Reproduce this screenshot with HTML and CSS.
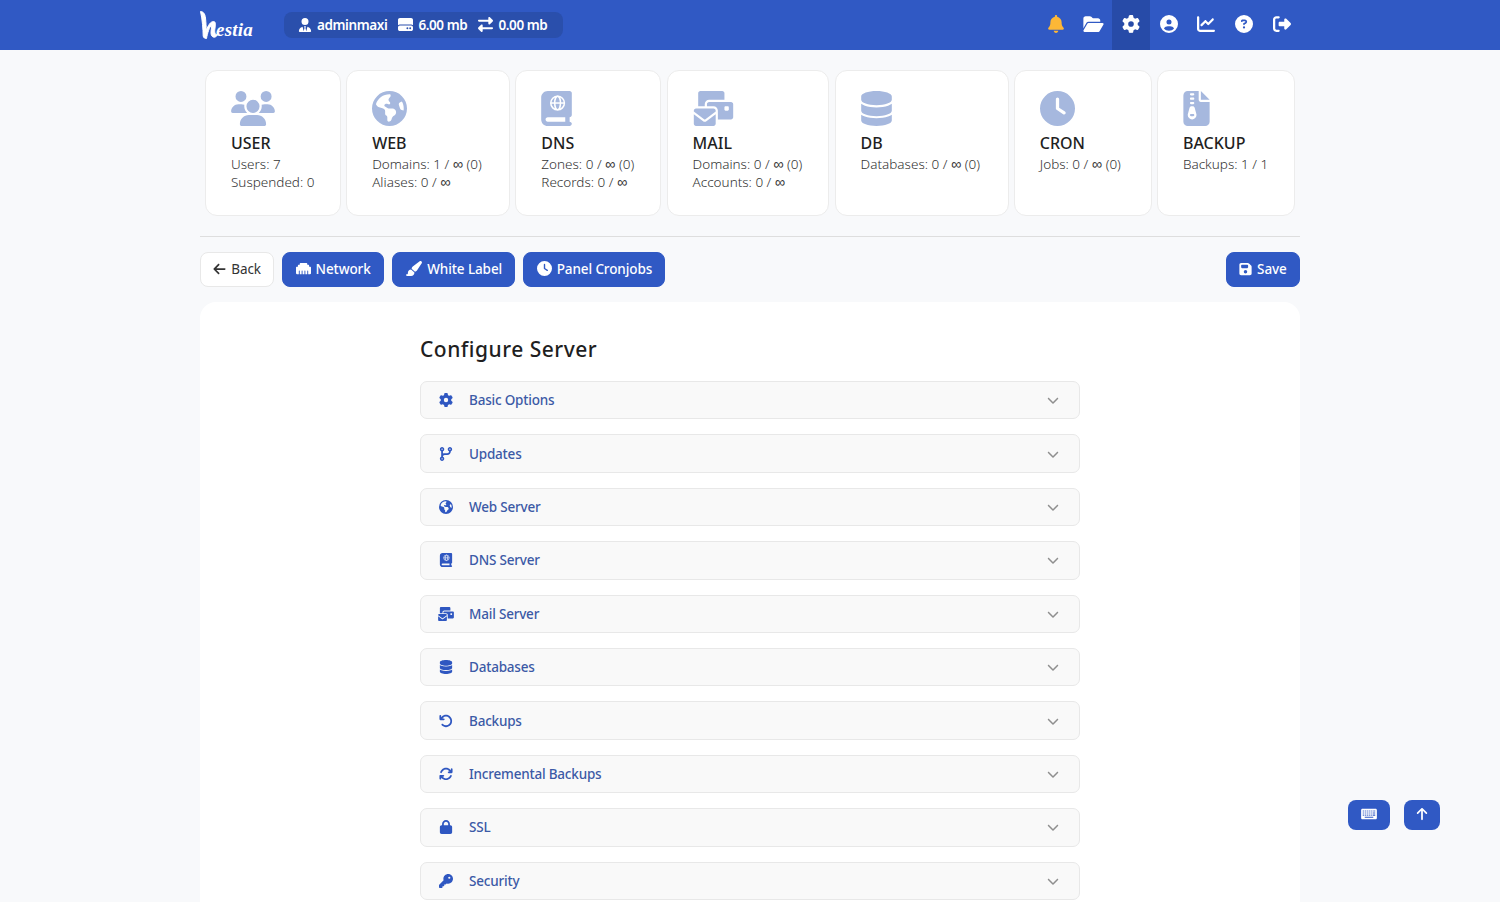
FILE: index.html
```html
<!DOCTYPE html>
<html lang="en">
<head>
<meta charset="utf-8">
<title>Configure Server</title>
<link rel="stylesheet" href="styles.css">
</head>
<body>
<svg class="sprite" xmlns="http://www.w3.org/2000/svg">
<symbol id="i-gear" viewBox="0 0 512 512"><path d="M495.9 166.6c3.2 8.7 .5 18.4-6.4 24.6l-43.3 39.4c1.1 8.3 1.7 16.8 1.7 25.4s-.6 17.1-1.7 25.4l43.3 39.4c6.9 6.2 9.6 15.9 6.4 24.6c-4.4 11.9-9.7 23.3-15.8 34.3l-4.7 8.1c-6.6 11-14 21.4-22.1 31.2c-5.9 7.2-15.7 9.6-24.5 6.8l-55.7-17.7c-13.4 10.3-28.2 18.9-44 25.4l-12.5 57.1c-2 9.1-9 16.3-18.2 17.8c-13.8 2.3-28 3.5-42.5 3.5s-28.7-1.2-42.5-3.5c-9.2-1.5-16.2-8.7-18.2-17.8l-12.5-57.1c-15.8-6.5-30.6-15.1-44-25.4L83.1 425.9c-8.8 2.8-18.6 .3-24.5-6.8c-8.1-9.8-15.5-20.2-22.1-31.2l-4.7-8.1c-6.1-11-11.4-22.4-15.8-34.3c-3.2-8.7-.5-18.4 6.4-24.6l43.3-39.4C64.6 273.1 64 264.6 64 256s.6-17.1 1.7-25.4L22.4 191.2c-6.9-6.2-9.6-15.9-6.4-24.6c4.4-11.9 9.7-23.3 15.8-34.3l4.7-8.1c6.6-11 14-21.4 22.1-31.2c5.9-7.2 15.7-9.6 24.5-6.8l55.7 17.7c13.4-10.3 28.2-18.9 44-25.4l12.5-57.1c2-9.1 9-16.3 18.2-17.8C227.3 1.2 241.5 0 256 0s28.7 1.2 42.5 3.5c9.2 1.5 16.2 8.7 18.2 17.8l12.5 57.1c15.8 6.5 30.6 15.1 44 25.4l55.7-17.7c8.8-2.8 18.6-.3 24.5 6.8c8.1 9.8 15.5 20.2 22.1 31.2l4.7 8.1c6.1 11 11.4 22.4 15.8 34.3zM256 336a80 80 0 1 0 0-160 80 80 0 1 0 0 160z"/></symbol>
<symbol id="i-bell" viewBox="0 0 448 512"><path d="M224 0c-17.7 0-32 14.3-32 32V51.2C119 66 64 130.6 64 208v18.8c0 47-17.3 92.4-48.5 127.6l-7.4 8.3c-8.4 9.4-10.4 22.9-5.3 34.4S19.4 416 32 416H416c12.6 0 24-7.4 29.2-18.9s3.1-25-5.3-34.4l-7.4-8.3C401.3 319.2 384 273.9 384 226.8V208c0-77.4-55-142-128-156.8V32c0-17.7-14.3-32-32-32zm45.3 493.3c12-12 18.7-28.3 18.7-45.3H224 160c0 17 6.7 33.3 18.7 45.3s28.3 18.7 45.3 18.7s33.3-6.7 45.3-18.7z"/></symbol>
<symbol id="i-folder" viewBox="0 0 576 512"><path d="M88.7 223.8L0 375.8V96C0 60.7 28.7 32 64 32H181.5c17 0 33.3 6.7 45.3 18.7l26.5 26.5c12 12 28.3 18.7 45.3 18.7H416c35.3 0 64 28.7 64 64v32H144c-22.8 0-43.8 12.1-55.3 31.8zm27.6 16.1C122.1 230 132.6 224 144 224H544c11.5 0 22 6.1 27.7 16.1s5.7 22.2-.1 32.1l-112 192C453.9 474 443.4 480 432 480H32c-11.5 0-22-6.1-27.7-16.1s-5.7-22.2 .1-32.1l112-192z"/></symbol>
<symbol id="i-cuser" viewBox="0 0 512 512"><path d="M399 384.2C376.9 345.8 335.4 320 288 320H224c-47.4 0-88.9 25.8-111 64.2c35.2 39.2 86.2 63.8 143 63.8s107.8-24.7 143-63.8zM0 256a256 256 0 1 1 512 0A256 256 0 1 1 0 256zm256 16a72 72 0 1 0 0-144 72 72 0 1 0 0 144z"/></symbol>
<symbol id="i-chart" viewBox="0 0 512 512"><path d="M64 64c0-17.7-14.3-32-32-32S0 46.3 0 64V400c0 44.2 35.8 80 80 80H480c17.7 0 32-14.3 32-32s-14.3-32-32-32H80c-8.8 0-16-7.2-16-16V64zm406.6 86.6c12.5-12.5 12.5-32.8 0-45.3s-32.8-12.5-45.3 0L320 210.7l-57.4-57.4c-12.5-12.5-32.8-12.5-45.3 0l-112 112c-12.5 12.5-12.5 32.8 0 45.3s32.8 12.5 45.3 0L240 221.3l57.4 57.4c12.5 12.5 32.8 12.5 45.3 0l128-128z"/></symbol>
<symbol id="i-help" viewBox="0 0 512 512"><path d="M256 512A256 256 0 1 0 256 0a256 256 0 1 0 0 512zM169.8 165.3c7.9-22.3 29.1-37.3 52.8-37.3h58.3c34.9 0 63.1 28.3 63.1 63.1c0 22.6-12.1 43.5-31.7 54.8L280 264.4c-.2 13-10.9 23.6-24 23.6c-13.3 0-24-10.7-24-24V250.5c0-8.6 4.6-16.5 12.1-20.8l44.3-25.4c4.7-2.7 7.6-7.7 7.6-13.1c0-8.4-6.8-15.1-15.1-15.1H222.6c-3.4 0-6.4 2.1-7.5 5.3l-.4 1.2c-4.4 12.5-18.2 19-30.6 14.6s-19-18.2-14.6-30.6l.4-1.2zM224 352a32 32 0 1 1 64 0 32 32 0 1 1 -64 0z"/></symbol>
<symbol id="i-logout" viewBox="0 0 512 512"><path d="M377.9 105.9L500.7 228.7c7.2 7.2 11.3 17.1 11.3 27.3s-4.1 20.1-11.3 27.3L377.9 406.1c-6.4 6.4-15 9.9-24 9.9c-18.7 0-33.9-15.2-33.9-33.9l0-62.1-128 0c-17.7 0-32-14.3-32-32l0-64c0-17.7 14.3-32 32-32l128 0 0-62.1c0-18.7 15.2-33.9 33.9-33.9c9 0 17.6 3.6 24 9.9zM160 96L96 96c-17.7 0-32 14.3-32 32l0 256c0 17.7 14.3 32 32 32l64 0c17.7 0 32 14.3 32 32s-14.3 32-32 32l-64 0c-53 0-96-43-96-96L0 128C0 75 43 32 96 32l64 0c17.7 0 32 14.3 32 32s-14.3 32-32 32z"/></symbol>
<symbol id="i-tie" viewBox="0 0 448 512"><path d="M96 128a128 128 0 1 0 256 0A128 128 0 1 0 96 128zm94.5 200.2l18.6 31L175.8 483.1l-36-146.9c-2-8.1-9.8-13.4-17.9-11.3C51.9 342.4 0 405.8 0 481.3c0 17 13.8 30.7 30.7 30.7H162.5c0 0 0 0 .1 0H168 280h5.5c0 0 0 0 .1 0H417.3c17 0 30.7-13.8 30.7-30.7c0-75.5-51.9-138.9-121.9-156.4c-8.1-2-15.9 3.3-17.9 11.3l-36 146.9L238.9 359.2l18.6-31c6.4-10.7-1.3-24.2-13.7-24.2H224 204.3c-12.4 0-20.1 13.6-13.7 24.2z"/></symbol>
<symbol id="i-drive" viewBox="0 0 512 512"><path d="M0 96C0 60.7 28.7 32 64 32H448c35.3 0 64 28.7 64 64V280.4c-17-15.2-39.4-24.4-64-24.4H64c-24.6 0-47 9.2-64 24.4V96zM64 288H448c35.3 0 64 28.7 64 64v64c0 35.3-28.7 64-64 64H64c-35.3 0-64-28.7-64-64V352c0-35.3 28.7-64 64-64zM320 416a32 32 0 1 0 0-64 32 32 0 1 0 0 64zm128-32a32 32 0 1 0 -64 0 32 32 0 1 0 64 0z"/></symbol>
<symbol id="i-swap" viewBox="0 0 512 512"><path d="M32 96l320 0V32c0-12.9 7.8-24.6 19.8-29.6s25.7-2.2 34.9 6.9l96 96c6 6 9.4 14.1 9.4 22.6s-3.4 16.6-9.4 22.6l-96 96c-9.2 9.2-22.9 11.9-34.9 6.9s-19.8-16.6-19.8-29.6V160L32 160c-17.7 0-32-14.3-32-32s14.3-32 32-32zM480 352c17.7 0 32 14.3 32 32s-14.3 32-32 32H160v64c0 12.9-7.8 24.6-19.8 29.6s-25.7 2.2-34.9-6.9l-96-96c-6-6-9.4-14.1-9.4-22.6s3.4-16.6 9.4-22.6l96-96c9.2-9.2 22.9-11.9 34.9-6.9s19.8 16.6 19.8 29.6l0 64H480z"/></symbol>
<symbol id="i-users" viewBox="0 0 640 512"><path d="M144 0a80 80 0 1 1 0 160A80 80 0 1 1 144 0zM512 0a80 80 0 1 1 0 160A80 80 0 1 1 512 0zM0 298.7C0 239.8 47.8 192 106.7 192h42.7c15.9 0 31 3.5 44.6 9.7c-1.3 7.2-1.9 14.7-1.9 22.3c0 38.2 16.8 72.5 43.3 96c-.2 0-.4 0-.7 0H21.3C9.6 320 0 310.4 0 298.7zM405.3 320c-.2 0-.4 0-.7 0c26.6-23.5 43.3-57.8 43.3-96c0-7.6-.7-15-1.9-22.3c13.6-6.3 28.7-9.7 44.6-9.7h42.7C592.2 192 640 239.8 640 298.7c0 11.8-9.6 21.3-21.3 21.3H405.3zM224 224a96 96 0 1 1 192 0 96 96 0 1 1 -192 0zM128 485.3C128 411.7 187.7 352 261.3 352H378.7C452.3 352 512 411.7 512 485.3c0 14.7-11.9 26.7-26.7 26.7H154.7c-14.7 0-26.7-11.9-26.7-26.7z"/></symbol>
<symbol id="i-earth" viewBox="0 0 512 512"><path d="M57.7 193l9.4 16.4c8.3 14.5 21.9 25.2 38 29.8L163 255.7c17.2 4.9 29 20.6 29 38.5v39.9c0 11 6.2 21 16 25.9s16 14.9 16 25.9v39c0 15.6 14.9 26.9 29.9 22.6c16.1-4.6 28.6-17.5 32.7-33.8l2.8-11.2c4.2-16.9 15.2-31.4 30.3-40l8.1-4.6c15-8.5 24.2-24.5 24.2-41.7v-8.3c0-12.7-5.1-24.9-14.1-33.9l-3.9-3.9c-9-9-21.2-14.1-33.9-14.1H257c-11.1 0-22.1-2.9-31.8-8.4l-34.5-19.7c-4.3-2.5-7.6-6.5-9.2-11.2c-3.2-9.6 1.1-20 10.2-24.5l5.9-3c6.6-3.3 14.3-3.9 21.3-1.5l23.2 7.7c8.2 2.7 17.2-.4 21.9-7.5c4.7-7 4.2-16.3-1.2-22.8l-13.6-16.3c-10-12-9.9-29.5 .3-41.3l15.7-18.3c8.8-10.3 10.2-25 3.5-36.7l-2.4-4.2c-3.5-.2-6.9-.3-10.4-.3C163.1 48 84.4 108.9 57.7 193zM464 256c0-36.8-9.6-71.4-26.4-101.5L412 164.8c-15.7 6.3-23.8 23.8-18.5 39.8l16.9 50.7c3.5 10.4 12 18.3 22.6 20.9l29.1 7.3c1.2-9 1.8-18.2 1.8-27.5zM0 256a256 256 0 1 1 512 0A256 256 0 1 1 0 256z"/></symbol>
<symbol id="i-atlas" viewBox="0 0 448 512"><path fill-rule="evenodd" d="M0 96C0 43 43 0 96 0H416c17.700 0 32 14.300 32 32V352c0 17.700-14.300 32-32 32v64c17.700 0 32 14.300 32 32s-14.300 32-32 32H96c-53 0-96-43-96-96V96zM64 416c0 17.700 14.300 32 32 32H352V384H96c-17.700 0-32 14.300-32 32z"/><g fill="none" stroke="#fff" stroke-width="22"><circle cx="240" cy="176" r="100"/><ellipse cx="240" cy="176" rx="42" ry="100"/><path d="M140 176H340"/></g></symbol>
<symbol id="i-bulk" viewBox="32 0 576 512"><path d="M128 0C110.300 0 96 14.300 96 32V224h96V192c0-35.300 28.700-64 64-64H480V32c0-17.700-14.300-32-32-32H128zM256 160c-17.700 0-32 14.300-32 32v32h96c35.300 0 64 28.700 64 64V416H576c17.700 0 32-14.300 32-32V192c0-17.700-14.300-32-32-32H256zm240 64h32c8.800 0 16 7.200 16 16v32c0 8.800-7.200 16-16 16H496c-8.800 0-16-7.200-16-16V240c0-8.800 7.200-16 16-16zM64 256c-17.700 0-32 14.300-32 32v13L187.100 415.900c1.400 1 3.100 1.600 4.900 1.600s3.500-.6 4.900-1.600L352 301V288c0-17.700-14.300-32-32-32H64zm288 84.800L216 441.600c-6.900 5.100-15.300 7.900-24 7.900s-17-2.800-24-7.900L32 340.800V480c0 17.700 14.300 32 32 32H320c17.700 0 32-14.300 32-32V340.800z"/></symbol>
<symbol id="i-db" viewBox="0 0 448 512"><path d="M448 80v48c0 44.2-100.3 80-224 80S0 172.2 0 128V80C0 35.8 100.3 0 224 0S448 35.8 448 80zM393.2 214.7c20.8-7.4 39.9-16.9 54.8-28.600V288c0 44.2-100.3 80-224 80S0 332.2 0 288V186.100c14.900 11.800 34 21.200 54.800 28.600C99.700 230.700 159.500 240 224 240s124.300-9.300 169.200-25.300zM0 346.100c14.900 11.800 34 21.200 54.800 28.600C99.700 390.700 159.500 400 224 400s124.300-9.300 169.200-25.300c20.800-7.400 39.900-16.900 54.800-28.600V432c0 44.200-100.300 80-224 80S0 476.200 0 432V346.100z"/></symbol>
<symbol id="i-clock" viewBox="0 0 512 512"><path d="M256 0a256 256 0 1 1 0 512A256 256 0 1 1 256 0zM232 120V256c0 8 4 15.500 10.700 20l96 64c11 7.400 25.900 4.400 33.300-6.700s4.400-25.900-6.700-33.300L280 243.200V120c0-13.300-10.700-24-24-24s-24 10.700-24 24z"/></symbol>
<symbol id="i-zip" viewBox="0 0 384 512"><path d="M64 0C28.700 0 0 28.700 0 64V448c0 35.300 28.700 64 64 64H320c35.300 0 64-28.700 64-64V160H256c-17.700 0-32-14.300-32-32V0H64zM256 0V128H384L256 0zM96 48c0-8.800 7.200-16 16-16h32c8.800 0 16 7.200 16 16s-7.200 16-16 16H112c-8.800 0-16-7.200-16-16zm0 64c0-8.800 7.200-16 16-16h32c8.800 0 16 7.200 16 16s-7.200 16-16 16H112c-8.800 0-16-7.200-16-16zm0 64c0-8.800 7.200-16 16-16h32c8.800 0 16 7.200 16 16s-7.200 16-16 16H112c-8.800 0-16-7.200-16-16zm-6.300 71.800c3.700-14 16.400-23.800 30.900-23.800h14.800c14.500 0 27.200 9.700 30.900 23.800l23.500 88.200c1.400 5.400 2.100 10.900 2.100 16.400c0 35.200-28.800 63.700-64 63.700s-64-28.500-64-63.700c0-5.500 .7-11.100 2.100-16.400l23.500-88.200zM112 336c-8.800 0-16 7.200-16 16s7.200 16 16 16h32c8.800 0 16-7.200 16-16s-7.200-16-16-16H112z"/></symbol>
<symbol id="i-left" viewBox="0 0 448 512"><path d="M9.400 233.400c-12.500 12.500-12.500 32.800 0 45.300l160 160c12.500 12.500 32.800 12.500 45.300 0s12.500-32.800 0-45.300L109.200 288 416 288c17.700 0 32-14.300 32-32s-14.300-32-32-32l-306.700 0L214.600 118.600c12.500-12.500 12.500-32.800 0-45.300s-32.800-12.500-45.300 0l-160 160z"/></symbol>
<symbol id="i-net" viewBox="0 0 512 512"><path d="M0 224V416c0 17.700 14.300 32 32 32H96V336c0-8.800 7.200-16 16-16s16 7.200 16 16V448h64V336c0-8.800 7.200-16 16-16s16 7.200 16 16V448h64V336c0-8.800 7.200-16 16-16s16 7.200 16 16V448h64V336c0-8.800 7.200-16 16-16s16 7.200 16 16V448h64c17.700 0 32-14.300 32-32V224c0-17.700-14.300-32-32-32H448V160c0-17.700-14.300-32-32-32H384V96c0-17.700-14.300-32-32-32H160c-17.700 0-32 14.300-32 32v32H96c-17.700 0-32 14.300-32 32v32H32c-17.700 0-32 14.300-32 32z"/></symbol>
<symbol id="i-brush" viewBox="0 0 576 512"><path d="M339.300 367.100c27.300-3.900 51.900-19.400 67.200-42.900L568.200 74.100c12.600-19.500 9.400-45.300-7.600-61.200S517.700-4.400 499.100 9.600L262.400 187.200c-24 18-38.200 46.100-38.400 76.100L339.300 367.100zm-19.600 25.400l-116-104.400C143.900 290.300 96 339.600 96 400c0 3.900 .2 7.800 .6 11.600C98.400 429.100 86.400 448 68.800 448H64c-17.700 0-32 14.300-32 32s14.300 32 32 32H208c61.900 0 112-50.100 112-112c0-2.500-.1-5-.2-7.500z"/></symbol>
<symbol id="i-save" viewBox="0 0 448 512"><path d="M64 32C28.700 32 0 60.700 0 96V416c0 35.300 28.700 64 64 64H384c35.300 0 64-28.700 64-64V173.300c0-17-6.700-33.300-18.700-45.300L352 50.700C340 38.700 323.700 32 306.700 32H64zm0 96c0-17.700 14.300-32 32-32H288c17.700 0 32 14.300 32 32v64c0 17.700-14.300 32-32 32H96c-17.700 0-32-14.300-32-32V128zM224 288a64 64 0 1 1 0 128 64 64 0 1 1 0-128z"/></symbol>
<symbol id="i-branch" viewBox="0 0 448 512"><path d="M80 104a24 24 0 1 0 0-48 24 24 0 1 0 0 48zm80-24c0 32.800-19.700 61-48 73.300v87.800c18.800-10.900 40.700-17.100 64-17.100h96c35.300 0 64-28.700 64-64v-6.700C307.700 141 288 112.800 288 80c0-44.200 35.800-80 80-80s80 35.800 80 80c0 32.800-19.700 61-48 73.300V160c0 70.700-57.300 128-128 128H176c-35.300 0-64 28.700-64 64v6.700c28.300 12.300 48 40.500 48 73.300c0 44.200-35.800 80-80 80s-80-35.800-80-80c0-32.800 19.700-61 48-73.300V352 153.300C19.700 141 0 112.800 0 80C0 35.800 35.800 0 80 0s80 35.800 80 80zm232 0a24 24 0 1 0 -48 0 24 24 0 1 0 48 0zM80 456a24 24 0 1 0 0-48 24 24 0 1 0 0 48z"/></symbol>
<symbol id="i-undo" viewBox="0 0 512 512"><path d="M125.700 160H176c17.700 0 32 14.300 32 32s-14.300 32-32 32H48c-17.700 0-32-14.300-32-32V64c0-17.700 14.300-32 32-32s32 14.300 32 32v51.200L97.600 97.600c87.500-87.500 229.300-87.500 316.800 0s87.500 229.300 0 316.800s-229.300 87.500-316.800 0c-12.500-12.500-12.500-32.800 0-45.300s32.800-12.500 45.300 0c62.500 62.500 163.800 62.500 226.300 0s62.500-163.800 0-226.300s-163.800-62.500-226.300 0L125.700 160z"/></symbol>
<symbol id="i-sync" viewBox="0 0 512 512"><path d="M105.100 202.600c7.700-21.800 20.200-42.300 37.800-59.800c62.500-62.500 163.800-62.500 226.300 0L386.300 160H352c-17.700 0-32 14.300-32 32s14.300 32 32 32H463.500c0 0 0 0 0 0h.4c17.700 0 32-14.300 32-32V80c0-17.700-14.300-32-32-32s-32 14.300-32 32v35.200L414.400 97.600c-87.500-87.500-229.300-87.500-316.800 0C73.200 122 55.600 150.700 44.800 181.400c-5.900 16.700 2.900 34.900 19.500 40.800s34.900-2.900 40.800-19.500zM39 289.300c-5 1.500-9.800 4.200-13.700 8.200c-4 4-6.700 8.800-8.100 14c-.3 1.200-.6 2.500-.8 3.800c-.3 1.700-.4 3.400-.4 5.100V432c0 17.700 14.300 32 32 32s32-14.300 32-32V396.900l17.600 17.500 0 0c87.500 87.400 229.300 87.400 316.700 0c24.400-24.400 42.100-53.100 52.900-83.700c5.900-16.700-2.900-34.900-19.500-40.800s-34.900 2.900-40.800 19.500c-7.700 21.800-20.200 42.300-37.800 59.800c-62.500 62.500-163.800 62.500-226.300 0l-.1-.1L125.600 352H160c17.700 0 32-14.300 32-32s-14.300-32-32-32H48.400c-1.600 0-3.200 .1-4.800 .3s-3.100 .5-4.600 1z"/></symbol>
<symbol id="i-lock" viewBox="0 0 448 512"><path d="M144 144v48H304V144c0-44.200-35.800-80-80-80s-80 35.800-80 80zM80 192V144C80 64.500 144.500 0 224 0s144 64.500 144 144v48h16c35.300 0 64 28.700 64 64V448c0 35.300-28.700 64-64 64H64c-35.300 0-64-28.700-64-64V256c0-35.300 28.700-64 64-64H80z"/></symbol>
<symbol id="i-key" viewBox="0 0 512 512"><path d="M336 352c97.200 0 176-78.800 176-176S433.200 0 336 0S160 78.800 160 176c0 18.700 2.900 36.800 8.300 53.700L7 391c-4.500 4.500-7 10.600-7 17v80c0 13.300 10.700 24 24 24h80c13.300 0 24-10.700 24-24V448h40c13.300 0 24-10.700 24-24V384h40c6.400 0 12.500-2.500 17-7l33.300-33.300c16.900 5.400 35 8.300 53.700 8.300zM376 96a40 40 0 1 1 0 80 40 40 0 1 1 0-80z"/></symbol>
<symbol id="i-chev" viewBox="0 0 512 512"><path d="M233.400 406.600c12.500 12.500 32.800 12.500 45.300 0l192-192c12.500-12.500 12.500-32.800 0-45.300s-32.800-12.500-45.300 0L256 338.700 86.600 169.400c-12.500-12.500-32.800-12.500-45.300 0s-12.500 32.800 0 45.300l192 192z"/></symbol>
<symbol id="i-up" viewBox="0 0 384 512"><path d="M214.600 41.400c-12.500-12.500-32.800-12.500-45.300 0l-160 160c-12.500 12.500-12.500 32.800 0 45.300s32.800 12.500 45.300 0L160 141.200V448c0 17.700 14.300 32 32 32s32-14.300 32-32V141.200L329.400 246.600c12.500 12.500 32.800 12.500 45.300 0s12.500-32.800 0-45.300l-160-160z"/></symbol>
<symbol id="i-kbd" viewBox="0 0 576 512"><path fill-rule="evenodd" d="M48 64H528C554.500 64 576 85.500 576 112V400C576 426.500 554.500 448 528 448H48C21.500 448 0 426.500 0 400V112C0 85.500 21.500 64 48 64ZM60 124V164H100V124ZM132 124V164H172V124ZM204 124V164H244V124ZM276 124V164H316V124ZM348 124V164H388V124ZM420 124V164H460V124ZM476 124V164H516V124ZM60 200V240H100V200ZM132 200V240H172V200ZM204 200V240H244V200ZM276 200V240H316V200ZM348 200V240H388V200ZM420 200V240H516V200ZM60 276V316H100V276ZM132 276V316H172V276ZM204 276V316H244V276ZM276 276V316H316V276ZM348 276V316H388V276ZM420 276V316H516V276ZM132 352V392H444V352Z"/></symbol>
</svg>

<header class="topbar">
  <div class="topbar-inner">
    <a class="logo" href="#">
      <svg class="logo-mark" viewBox="0 0 18 28"><path d="M0.500 0.500C3 0.500 5 2.500 5.500 7C6 11.500 6.200 16 6.300 19.500C8 14.500 10.500 10.500 13.500 10.500C16 10.500 15.500 14 15 17C14.500 20.500 14.500 24 17.500 23.500C16.500 27 11.500 27.500 11 22.500C10.800 19.500 12 16 11.500 14.500C9.500 15.500 7.500 22 6.500 27.500C5 27.500 3.500 27 3.200 25C3 18 2.500 9 0.500 0.500Z" fill="#fff" stroke="#fff" stroke-width="1"/></svg>
      <span class="logo-text">estia</span>
    </a>
    <div class="stats-pill">
      <span class="stat"><svg class="ic ic-14"><use href="#i-tie"/></svg>adminmaxi</span>
      <span class="stat"><svg class="ic ic-15"><use href="#i-drive"/></svg>6.00 mb</span>
      <span class="stat"><svg class="ic ic-15"><use href="#i-swap"/></svg>0.00 mb</span>
    </div>
    <nav class="top-nav">
      <a class="nav-item nav-bell" href="#"><svg class="ic ic-18"><use href="#i-bell"/></svg></a>
      <a class="nav-item" href="#"><svg class="ic ic-folder"><use href="#i-folder"/></svg></a>
      <a class="nav-item active" href="#"><svg class="ic ic-18"><use href="#i-gear"/></svg></a>
      <a class="nav-item" href="#"><svg class="ic ic-18"><use href="#i-cuser"/></svg></a>
      <a class="nav-item" href="#"><svg class="ic ic-18"><use href="#i-chart"/></svg></a>
      <a class="nav-item" href="#"><svg class="ic ic-18"><use href="#i-help"/></svg></a>
      <a class="nav-item" href="#"><svg class="ic ic-18"><use href="#i-logout"/></svg></a>
    </nav>
  </div>
</header>

<main class="page">
  <section class="cards">
    <a class="card" href="#"><svg class="card-icon icon-users"><use href="#i-users"/></svg><h3>USER</h3><p>Users: 7</p><p>Suspended: 0</p></a>
    <a class="card" href="#"><svg class="card-icon icon-earth"><use href="#i-earth"/></svg><h3>WEB</h3><p>Domains: 1 / <span class="inf">∞</span> (0)</p><p>Aliases: 0 / <span class="inf">∞</span></p></a>
    <a class="card" href="#"><svg class="card-icon icon-atlas"><use href="#i-atlas"/></svg><h3>DNS</h3><p>Zones: 0 / <span class="inf">∞</span> (0)</p><p>Records: 0 / <span class="inf">∞</span></p></a>
    <a class="card" href="#"><svg class="card-icon icon-bulk"><use href="#i-bulk"/></svg><h3>MAIL</h3><p>Domains: 0 / <span class="inf">∞</span> (0)</p><p>Accounts: 0 / <span class="inf">∞</span></p></a>
    <a class="card" href="#"><svg class="card-icon icon-db"><use href="#i-db"/></svg><h3>DB</h3><p>Databases: 0 / <span class="inf">∞</span> (0)</p></a>
    <a class="card" href="#"><svg class="card-icon icon-clock"><use href="#i-clock"/></svg><h3>CRON</h3><p>Jobs: 0 / <span class="inf">∞</span> (0)</p></a>
    <a class="card" href="#"><svg class="card-icon icon-zip"><use href="#i-zip"/></svg><h3>BACKUP</h3><p>Backups: 1 / 1</p></a>
  </section>

  <div class="toolbar">
    <div class="toolbar-left">
      <a class="btn btn-plain" href="#"><svg class="ic ic-13"><use href="#i-left"/></svg>Back</a>
      <a class="btn" href="#"><svg class="ic ic-net"><use href="#i-net"/></svg>Network</a>
      <a class="btn" href="#"><svg class="ic ic-brush"><use href="#i-brush"/></svg>White Label</a>
      <a class="btn" href="#"><svg class="ic ic-15"><use href="#i-clock"/></svg>Panel Cronjobs</a>
    </div>
    <a class="btn" href="#"><svg class="ic ic-13"><use href="#i-save"/></svg>Save</a>
  </div>

  <section class="panel">
    <div class="panel-body">
      <h1>Configure Server</h1>
      <details class="acc"><summary><svg class="ic acc-ic"><use href="#i-gear"/></svg><span class="acc-label">Basic Options</span><svg class="ic acc-chev"><use href="#i-chev"/></svg></summary></details>
      <details class="acc"><summary><svg class="ic acc-ic"><use href="#i-branch"/></svg><span class="acc-label">Updates</span><svg class="ic acc-chev"><use href="#i-chev"/></svg></summary></details>
      <details class="acc"><summary><svg class="ic acc-ic"><use href="#i-earth"/></svg><span class="acc-label">Web Server</span><svg class="ic acc-chev"><use href="#i-chev"/></svg></summary></details>
      <details class="acc"><summary><svg class="ic acc-ic"><use href="#i-atlas"/></svg><span class="acc-label">DNS Server</span><svg class="ic acc-chev"><use href="#i-chev"/></svg></summary></details>
      <details class="acc"><summary><svg class="ic acc-ic"><use href="#i-bulk"/></svg><span class="acc-label">Mail Server</span><svg class="ic acc-chev"><use href="#i-chev"/></svg></summary></details>
      <details class="acc"><summary><svg class="ic acc-ic"><use href="#i-db"/></svg><span class="acc-label">Databases</span><svg class="ic acc-chev"><use href="#i-chev"/></svg></summary></details>
      <details class="acc"><summary><svg class="ic acc-ic"><use href="#i-undo"/></svg><span class="acc-label">Backups</span><svg class="ic acc-chev"><use href="#i-chev"/></svg></summary></details>
      <details class="acc"><summary><svg class="ic acc-ic"><use href="#i-sync"/></svg><span class="acc-label">Incremental Backups</span><svg class="ic acc-chev"><use href="#i-chev"/></svg></summary></details>
      <details class="acc"><summary><svg class="ic acc-ic"><use href="#i-lock"/></svg><span class="acc-label">SSL</span><svg class="ic acc-chev"><use href="#i-chev"/></svg></summary></details>
      <details class="acc"><summary><svg class="ic acc-ic"><use href="#i-key"/></svg><span class="acc-label">Security</span><svg class="ic acc-chev"><use href="#i-chev"/></svg></summary></details>
    </div>
  </section>
</main>

<div class="float-actions">
  <a class="float-btn float-kbd" href="#"><svg class="ic ic-kbd"><use href="#i-kbd"/></svg></a>
  <a class="float-btn float-up" href="#"><svg class="ic ic-up"><use href="#i-up"/></svg></a>
</div>
</body>
</html>
```

FILE: styles.css
```css
* { box-sizing: border-box; }
html, body { margin: 0; height: 100%; overflow: hidden; }
body {
  background: #f8f9fb;
  color: #1f1f1f;
  font-family: "Noto Sans", "Open Sans", sans-serif;
  font-size: 14px;
}
a { color: inherit; text-decoration: none; }
.sprite { display: none; }
.ic { display: block; fill: currentColor; flex: none; }
.ic-13 { width: 13px; height: 14px; }
.ic-14 { width: 14px; height: 14px; }
.ic-15 { width: 15px; height: 15px; }
.ic-18 { width: 18px; height: 18px; }
.ic-net { width: 15px; height: 15px; }
.ic-folder { width: 21px; height: 18px; }
.ic-brush { width: 17px; height: 15px; }
.ic-kbd { width: 16px; height: 14px; }
.ic-up { width: 12px; height: 14px; }

.topbar { height: 50px; background: #3059c4; color: #fff; }
.topbar-inner { width: 1100px; height: 50px; margin: 0 auto; display: flex; align-items: center; }
.logo { width: 84px; height: 50px; display: flex; align-items: flex-end; padding-bottom: 11px; }
.logo-mark { width: 18px; height: 28px; margin-right: -2px; }
.logo-text { font-family: "Liberation Serif", serif; font-style: italic; font-weight: 700; font-size: 19px; line-height: 19px; letter-spacing: .2px; }
.stats-pill { height: 26px; width: 279px; padding: 0 0 1px 14px; display: flex; align-items: center; gap: 11px; background: #2a4fac; border-radius: 8px; font-weight: 600; font-size: 13.500px; letter-spacing: -.4px; }
.stat { display: flex; align-items: center; gap: 5px; white-space: nowrap; }
.top-nav { margin: 0 -.5px 0 auto; display: flex; height: 50px; }
.nav-item { width: 37.700px; height: 50px; padding-bottom: 2px; display: flex; align-items: center; justify-content: center; }
.nav-item.active { background: #274ba8; }
.nav-bell { color: #fdb736; }

.page { width: 1100px; margin: 0 auto; }
.cards { margin: 20px 5px 0; display: grid; grid-template-columns: 136px 164px 146.100px 162.900px 174px 138px 138px; justify-content: space-between; padding-bottom: 20px; }
.card { height: 146px; background: #fff; border: 1px solid #ececec; border-radius: 12px; padding: 20px 0 0 25px; }
.card h3 { margin: 7px 0 2px; font-size: 16px; line-height: 20px; font-weight: 500; color: #1f1f1f; }
.card p { margin: 0; font-size: 13.500px; font-weight: 300; line-height: 18px; color: #333; white-space: nowrap; }
.inf { font-family: "DejaVu Sans", sans-serif; font-size: 14.500px; line-height: 0; }
.card-icon { display: block; height: 35px; fill: #a6b8de; color: #a6b8de; }
.icon-users { width: 44px; }
.icon-earth, .icon-clock { width: 35px; }
.icon-atlas { width: 31px; }
.icon-bulk { width: 41px; }
.icon-db { width: 31px; }
.icon-zip { width: 27px; }

.toolbar { border-top: 1px solid #dedede; padding-top: 15px; display: flex; justify-content: space-between; }
.toolbar-left { display: flex; gap: 8px; }
.btn { height: 35px; padding: 0 12.300px 2px; display: flex; align-items: center; gap: 5px; background: #3059c4; color: #fff; border: 1px solid #3059c4; border-radius: 8px; font-size: 13.500px; font-weight: 500; letter-spacing: -.1px; white-space: nowrap; }
.btn-plain { background: #fff; color: #333; border-color: #e8e8e8; font-weight: 400; }

.panel { margin-top: 15px; height: 700px; background: #fff; border-radius: 16px 16px 0 0; padding-top: 33px; }
.panel-body { width: 660px; margin: 0 auto; }
h1 { margin: 0 0 16.900px; font-size: 21px; line-height: 29px; font-weight: 500; letter-spacing: .5px; color: #1f1f1f; }
.acc { margin-bottom: 15px; height: 38.420px; background: #f9f9f9; border: 1px solid #e8e8e8; border-radius: 7px; }
.acc summary { height: 100%; display: flex; align-items: center; padding: 0 20px 0 17px; list-style: none; }
.acc summary::-webkit-details-marker { display: none; }
.acc-ic { width: 16px; height: 14px; color: #2f57c1; }
.acc-label { margin-left: 15px; font-size: 13.500px; font-weight: 500; letter-spacing: -.2px; color: #3c5aa6; }
.acc-chev { margin-left: auto; width: 12px; height: 12px; color: #8f8f8f; }

.float-actions { position: fixed; right: 60px; bottom: 72px; display: flex; gap: 14px; }
.float-btn { height: 30px; padding-bottom: 2px; display: flex; align-items: center; justify-content: center; background: #3059c4; color: #fff; border-radius: 8px; }
.float-kbd { width: 42px; }
.float-up { width: 36px; }
```
